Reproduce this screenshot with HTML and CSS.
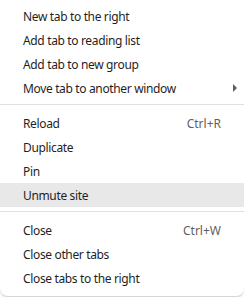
FILE: index.html
```html
<!doctype html>
<html>
<head>
<meta charset="UTF-8">
<title>Tab menu</title>
<link rel="stylesheet" href="styles.css">
</head>
<body>
<div class="menu">
  <div class="item"><span class="label">New tab to the right</span></div>
  <div class="item"><span class="label">Add tab to reading list</span></div>
  <div class="item"><span class="label">Add tab to new group</span></div>
  <div class="item"><span class="label">Move tab to another window</span><span class="arrow"></span></div>
  <div class="sep"></div>
  <div class="item"><span class="label">Reload</span><span class="key">Ctrl+R</span></div>
  <div class="item"><span class="label">Duplicate</span></div>
  <div class="item"><span class="label">Pin</span></div>
  <div class="item hover"><span class="label">Unmute site</span></div>
  <div class="sep"></div>
  <div class="item"><span class="label">Close</span><span class="key">Ctrl+W</span></div>
  <div class="item"><span class="label">Close other tabs</span></div>
  <div class="item"><span class="label">Close tabs to the right</span></div>
</div>
</body>
</html>
```
FILE: styles.css
```css
html, body {
  margin: 0;
  background: #ffffff;
}

.menu {
  width: 244px;
  height: 297px;
  box-sizing: border-box;
  padding: 4px 0 6px;
  background: #ffffff;
  border-bottom: 1px solid #d6d6d6;
  border-radius: 0 0 8px 8px;
  box-shadow: 0 1px 2px rgba(0, 0, 0, 0.12);
  font-family: "Noto Sans", sans-serif;
  font-size: 12px;
  letter-spacing: -0.35px;
  color: #1f1f1f;
}

.item {
  display: flex;
  align-items: center;
  height: 24px;
  padding: 0 23px 0 23px;
}

.item.hover {
  background: #e8e8e8;
}

.label {
  flex: 1;
  white-space: nowrap;
}

.key {
  color: #5f5f5f;
  letter-spacing: 0;
}

/* small submenu triangle */
.arrow {
  width: 0;
  height: 0;
  margin-right: -16px;
  border-top: 4px solid transparent;
  border-bottom: 4px solid transparent;
  border-left: 4px solid #5f5f5f;
}

.sep {
  height: 1px;
  margin: 4px 0 6px;
  background: #e0e0e0;
}
```
